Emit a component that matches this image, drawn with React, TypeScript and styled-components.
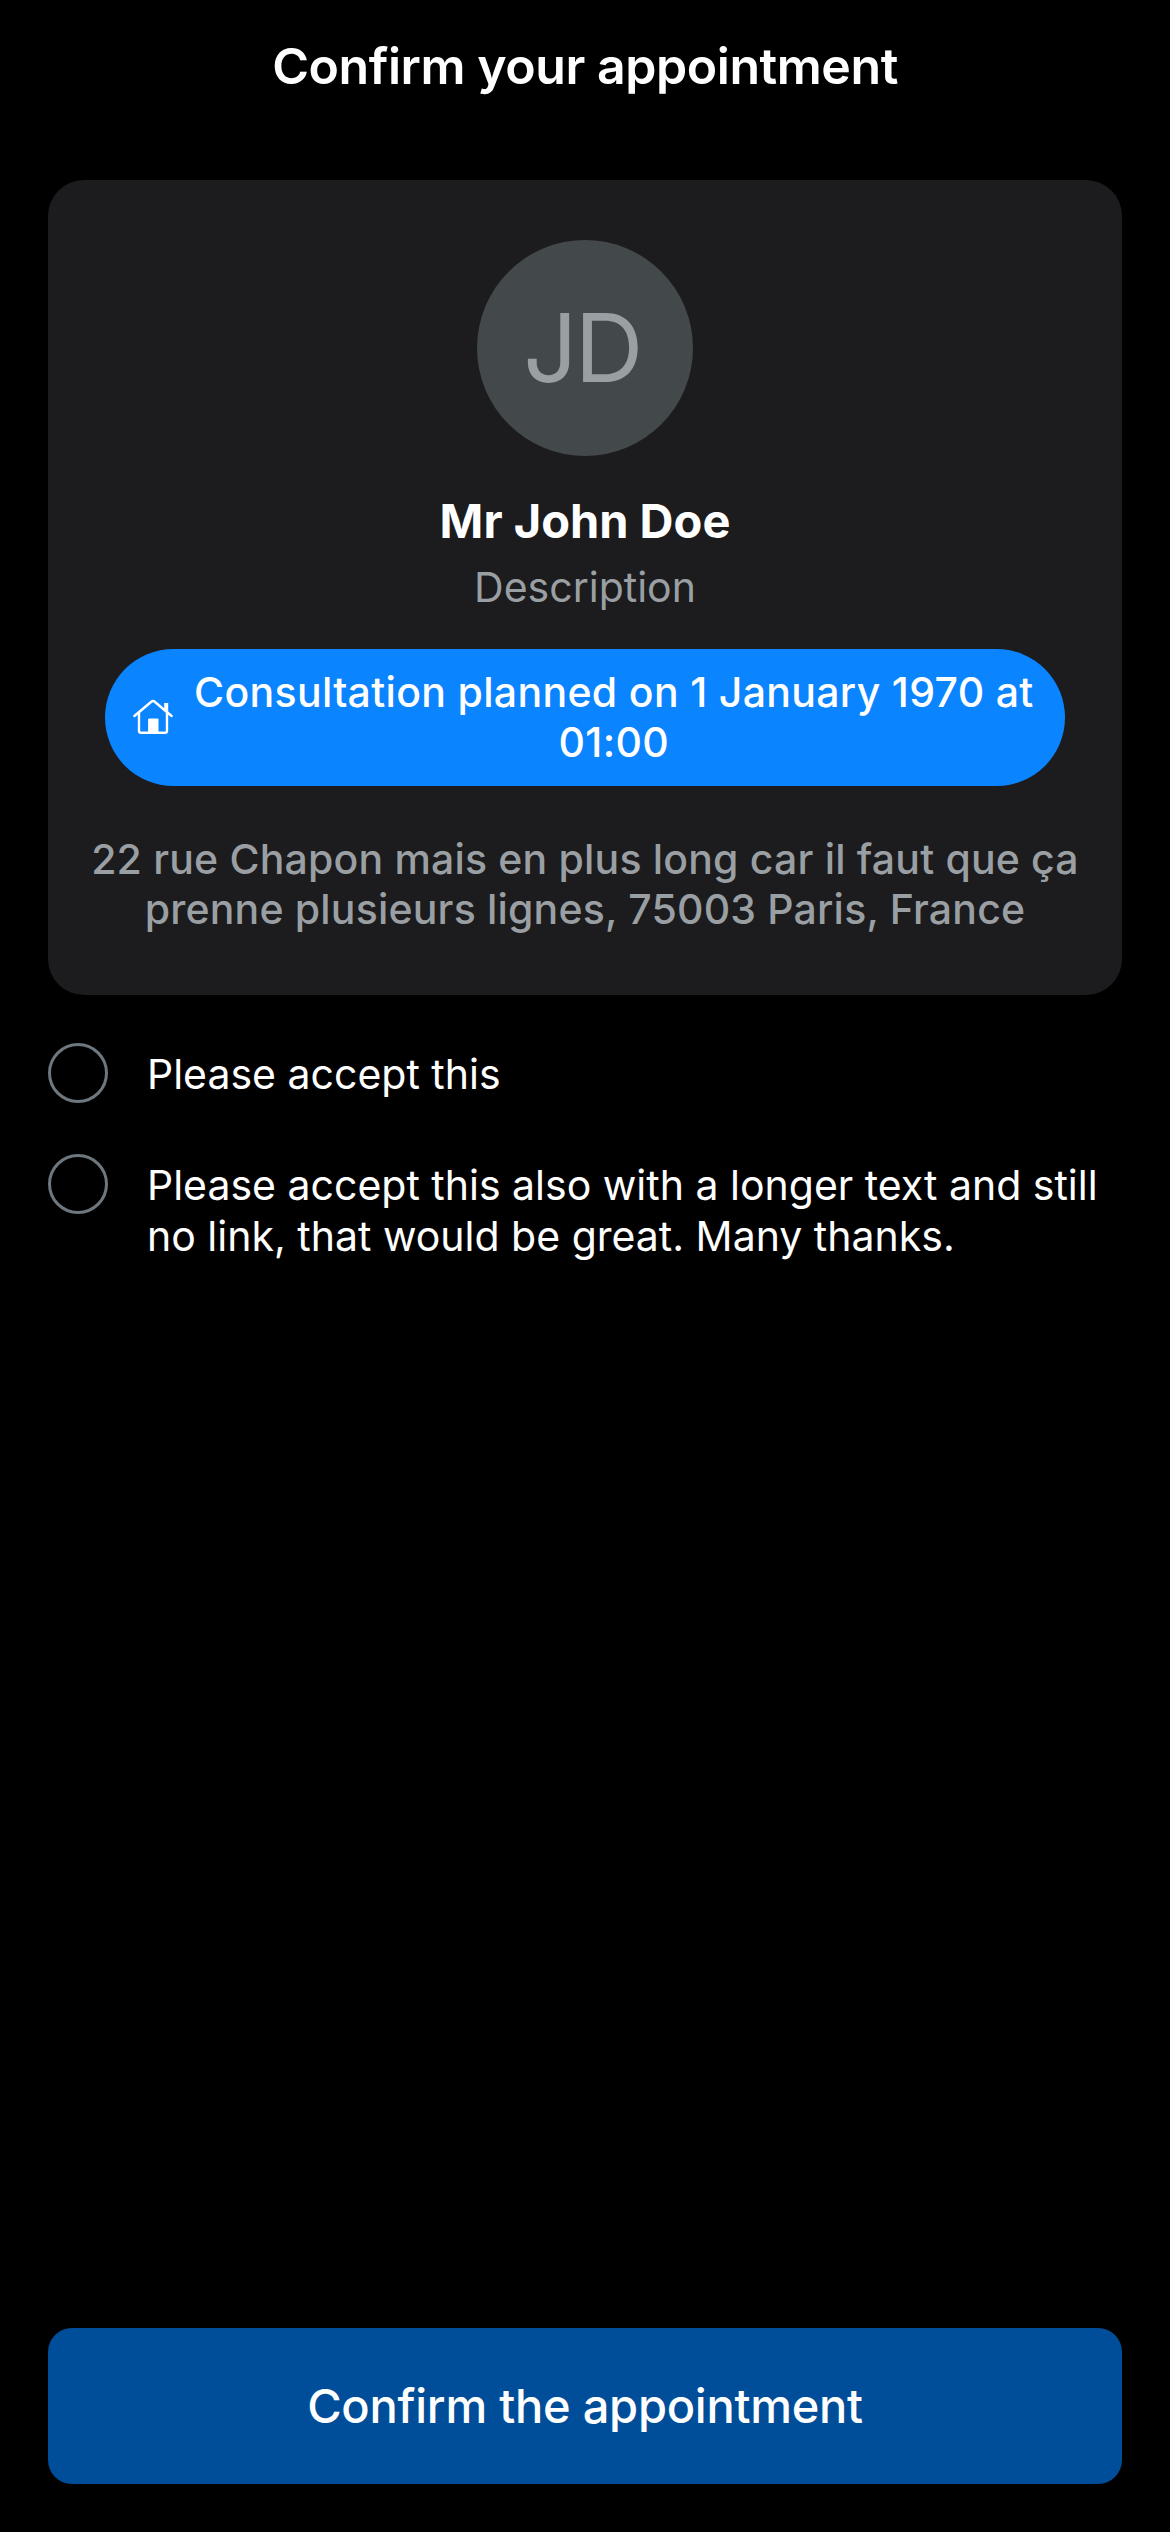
import React from 'react';
import styled, { createGlobalStyle } from 'styled-components';

const GlobalStyle = createGlobalStyle`
  * { box-sizing: border-box; }
  body {
    margin: 0;
    background: #000;
    color: #fff;
    font-family: Inter, "Liberation Sans", sans-serif;
  }
`;

const Screen = styled.div`
  display: flex;
  flex-direction: column;
  min-height: 2532px;
  padding: 36px 48px 48px;
  background: #000;
`;

const Title = styled.h1`
  margin: 0 0 84px;
  font-size: 50px;
  font-weight: 600;
  line-height: 60px;
  letter-spacing: -0.444px;
  text-align: center;
`;

const Card = styled.section`
  display: flex;
  flex-direction: column;
  align-items: center;
  padding: 60px 0 61px;
  border-radius: 36px;
  background: #1c1c1e;
`;

const Avatar = styled.div`
  display: flex;
  align-items: center;
  justify-content: center;
  width: 216px;
  height: 216px;
  padding-right: 6px;
  border-radius: 50%;
  background: #43484b;
  color: #9a9fa3;
  font-size: 95px;
  line-height: 114px;
  letter-spacing: -2.7px;
`;

const Name = styled.h2`
  margin: 36px 0 12px;
  font-size: 47px;
  font-weight: 700;
  line-height: 58px;
`;

const Description = styled.p`
  margin: 0;
  color: #9a9fa3;
  font-size: 41px;
  line-height: 50px;
`;

const Pill = styled.div`
  display: flex;
  align-items: center;
  gap: 20px;
  width: 960px;
  height: 137px;
  margin: 37px 0 48px;
  padding: 0 24px 1px 27px;
  border-radius: 69px;
  background: #0a84ff;
`;

const Lines = styled.p<{ $color: string; $spacing: number }>`
  flex: none;
  margin: 0;
  color: ${(p) => p.$color};
  font-size: 41px;
  font-weight: 500;
  line-height: 50px;
  letter-spacing: ${(p) => p.$spacing}px;
  text-align: center;
  white-space: nowrap;
`;

const HouseSvg = styled.svg`
  flex: none;
  display: block;
  width: 42px;
  height: 36px;
`;

const Terms = styled.ul`
  display: flex;
  flex-direction: column;
  gap: 51px;
  margin: 48px 0 0;
  padding: 0;
  list-style: none;
`;

const Term = styled.li`
  display: flex;
  align-items: flex-start;
  gap: 39px;
  min-height: 60px;
`;

const Check = styled.button`
  flex: none;
  width: 60px;
  height: 60px;
  padding: 0;
  border: 3px solid #6e777e;
  border-radius: 50%;
  background: transparent;
`;

const TermText = styled.span`
  height: 54px;
  padding-top: 6px;
  font-size: 41px;
  line-height: 51px;
  white-space: nowrap;
`;

const ConfirmButton = styled.button`
  width: 100%;
  height: 156px;
  margin-top: auto;
  padding: 0;
  border: 0;
  border-radius: 24px;
  background: #004e99;
  color: #fff;
  font-family: inherit;
  font-size: 47px;
  font-weight: 500;
  line-height: 58px;
  letter-spacing: -0.244px;
`;

function House() {
  return (
    <HouseSvg viewBox="0 0 42 36" fill="none" stroke="#fff" strokeWidth="2.4" strokeLinecap="round" strokeLinejoin="round">
      <path d="M2.4 17 L19.6 2.5 Q21 1.3 22.4 2.5 L39.6 17" />
      <path d="M7 13.5 V31.8 Q7 33.8 9 33.8 H33 Q35 33.8 35 31.8 V13.5" />
      <path d="M32.2 4 H36.2 V14.4 L32.2 11 Z" fill="#fff" stroke="none" />
      <path d="M17 20 H26 V33 H17 Z" fill="#fff" strokeWidth="1" />
    </HouseSvg>
  );
}

export default function App() {
  return (
    <>
      <GlobalStyle />
      <Screen>
        <Title>Confirm your appointment</Title>
        <Card>
          <Avatar>JD</Avatar>
          <Name>Mr John Doe</Name>
          <Description>Description</Description>
          <Pill>
            <House />
            <Lines $color="#fff" $spacing={0.328}>
              Consultation planned on 1 January 1970 at
              <br />
              01:00
            </Lines>
          </Pill>
          <Lines $color="#9a9fa3" $spacing={0.18}>
            22 rue Chapon mais en plus long car il faut que ça
            <br />
            prenne plusieurs lignes, 75003 Paris, France
          </Lines>
        </Card>
        <Terms>
          <Term>
            <Check aria-label="Accept" />
            <TermText>Please accept this</TermText>
          </Term>
          <Term>
            <Check aria-label="Accept" />
            <TermText>
              Please accept this also with a longer text and still
              <br />
              no link, that would be great. Many thanks.
            </TermText>
          </Term>
        </Terms>
        <ConfirmButton>Confirm the appointment</ConfirmButton>
      </Screen>
    </>
  );
}
